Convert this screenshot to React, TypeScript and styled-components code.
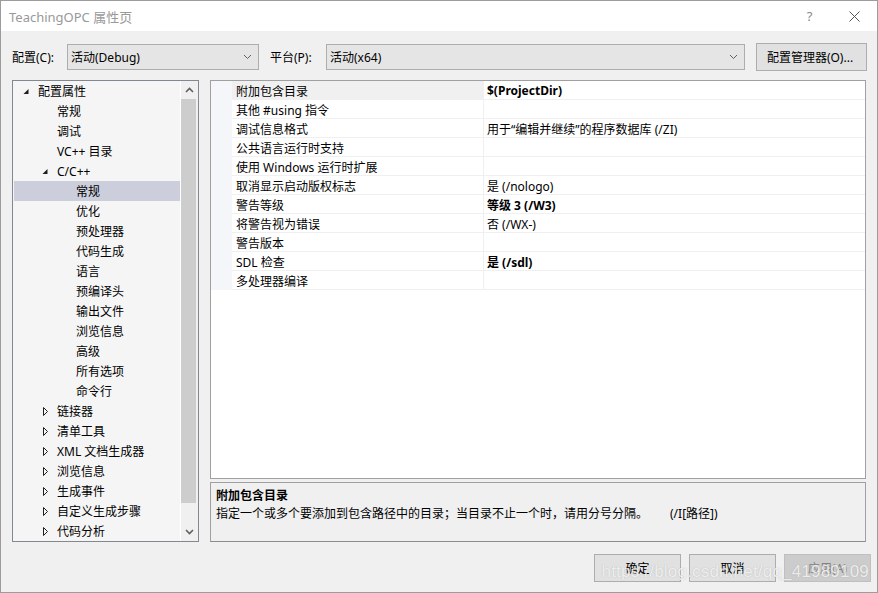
import React from "react";
import styled, { createGlobalStyle } from "styled-components";

const GlobalStyle = createGlobalStyle`
  html, body {
    margin: 0;
    padding: 0;
    background: #f0f0f0;
  }
  * {
    box-sizing: border-box;
  }
`;

const font = `"Segoe UI", "Noto Sans", "Noto Sans CJK SC", sans-serif`;

type TreeItem = {
  label: string;
  level: number;
  arrow?: "open" | "closed";
  selected?: boolean;
};

const treeItems: TreeItem[] = [
  { label: "配置属性", level: 0, arrow: "open" },
  { label: "常规", level: 1 },
  { label: "调试", level: 1 },
  { label: "VC++ 目录", level: 1 },
  { label: "C/C++", level: 1, arrow: "open" },
  { label: "常规", level: 2, selected: true },
  { label: "优化", level: 2 },
  { label: "预处理器", level: 2 },
  { label: "代码生成", level: 2 },
  { label: "语言", level: 2 },
  { label: "预编译头", level: 2 },
  { label: "输出文件", level: 2 },
  { label: "浏览信息", level: 2 },
  { label: "高级", level: 2 },
  { label: "所有选项", level: 2 },
  { label: "命令行", level: 2 },
  { label: "链接器", level: 1, arrow: "closed" },
  { label: "清单工具", level: 1, arrow: "closed" },
  { label: "XML 文档生成器", level: 1, arrow: "closed" },
  { label: "浏览信息", level: 1, arrow: "closed" },
  { label: "生成事件", level: 1, arrow: "closed" },
  { label: "自定义生成步骤", level: 1, arrow: "closed" },
  { label: "代码分析", level: 1, arrow: "closed" },
];

type Prop = { name: string; value?: string; bold?: boolean };

const props: Prop[] = [
  { name: "附加包含目录", value: "$(ProjectDir)", bold: true },
  { name: "其他 #using 指令" },
  { name: "调试信息格式", value: "用于“编辑并继续”的程序数据库 (/ZI)" },
  { name: "公共语言运行时支持" },
  { name: "使用 Windows 运行时扩展" },
  { name: "取消显示启动版权标志", value: "是 (/nologo)" },
  { name: "警告等级", value: "等级 3 (/W3)", bold: true },
  { name: "将警告视为错误", value: "否 (/WX-)" },
  { name: "警告版本" },
  { name: "SDL 检查", value: "是 (/sdl)", bold: true },
  { name: "多处理器编译" },
];

const Window = styled.div`
  position: relative;
  width: 878px;
  height: 593px;
  border: 1px solid #9c9c9c;
  background: #f0f0f0;
  font-family: ${font};
  font-size: 12px;
  color: #000;
  display: flex;
  flex-direction: column;
  overflow: hidden;
`;

const TitleBar = styled.div`
  height: 30px;
  flex: none;
  background: #fff;
  display: flex;
  align-items: center;
  padding: 0 0 0 8px;
`;

const Title = styled.div`
  flex: 1;
  font-size: 13px;
  color: #999;
`;

const TitleButton = styled.div`
  width: 45px;
  height: 30px;
  display: flex;
  align-items: center;
  justify-content: center;
  color: #8a8a8a;
  font-size: 13px;
`;

const Toolbar = styled.div`
  height: 49px;
  flex: none;
  display: flex;
  align-items: flex-start;
  padding: 13px 0 0 11px;
`;

const Label = styled.div<{ $w: number }>`
  width: ${(p) => p.$w}px;
  height: 26px;
  display: flex;
  align-items: center;
  flex: none;
`;

const Combo = styled.div<{ $w: number }>`
  width: ${(p) => p.$w}px;
  height: 26px;
  flex: none;
  border: 1px solid #adadad;
  background: #e5e5e5;
  display: flex;
  align-items: center;
  padding: 0 0 0 3px;
  margin-right: 11px;
`;

const ComboText = styled.span`
  flex: 1;
`;

const ComboArrow = styled.svg`
  width: 20px;
  height: 10px;
  flex: none;
`;

const Button = styled.div<{ $w: number; $disabled?: boolean }>`
  width: ${(p) => p.$w}px;
  height: 28px;
  flex: none;
  border: 1px solid ${(p) => (p.$disabled ? "#bfbfbf" : "#adadad")};
  background: ${(p) => (p.$disabled ? "#cccccc" : "#e1e1e1")};
  color: ${(p) => (p.$disabled ? "#838383" : "#000")};
  display: flex;
  align-items: center;
  justify-content: center;
`;

const ManagerButton = styled(Button)`
  margin-top: -1px;
  padding-right: 3px;
`;

const Main = styled.div`
  height: 462px;
  flex: none;
  display: flex;
  padding: 0 0 0 11px;
  gap: 11px;
`;

const TreePanel = styled.div`
  width: 187px;
  height: 462px;
  border: 1px solid #828790;
  background: #f5f5f5;
  display: flex;
`;

const TreeList = styled.div`
  flex: 1;
  padding-left: 1px;
`;

const TreeRow = styled.div<{ $level: number; $selected?: boolean }>`
  height: 20px;
  display: flex;
  align-items: center;
  padding-left: ${(p) => 5 + p.$level * 19}px;
  background: ${(p) => (p.$selected ? "#cccedb" : "transparent")};
  white-space: nowrap;
`;

const ArrowBox = styled.svg`
  width: 19px;
  height: 20px;
  flex: none;
`;

const ScrollBar = styled.div`
  width: 18px;
  flex: none;
  background: #f0f0f0;
  border-left: 1px solid #fff;
  display: flex;
  flex-direction: column;
`;

const ScrollButton = styled.div`
  height: 18px;
  flex: none;
  display: flex;
  align-items: center;
  justify-content: center;
`;

const ScrollTrack = styled.div`
  flex: 1;
  padding: 0 2px 20px 0;
`;

const Thumb = styled.div`
  height: 404px;
  background: #cdcdcd;
`;

const RightColumn = styled.div`
  width: 656px;
  display: flex;
  flex-direction: column;
  gap: 3px;
`;

const Grid = styled.div`
  height: 399px;
  border: 1px solid #a0a0a0;
  background: #fff;
`;

const GridRow = styled.div`
  height: 19px;
  display: flex;
`;

const Gutter = styled.div`
  width: 21px;
  flex: none;
  background: #f4f6fa;
`;

const NameCell = styled.div<{ $selected?: boolean }>`
  width: 252px;
  flex: none;
  padding: 1px 0 0 4px;
  display: flex;
  align-items: center;
  background: ${(p) => (p.$selected ? "#f0f0f0" : "#fff")};
  border-bottom: 1px solid #f0f0f0;
  border-right: 1px solid #f0f0f0;
  white-space: nowrap;
`;

const ValueCell = styled.div<{ $bold?: boolean }>`
  flex: 1;
  padding: 1px 0 0 3px;
  display: flex;
  align-items: center;
  font-weight: ${(p) => (p.$bold ? 700 : 400)};
  border-bottom: 1px solid #f0f0f0;
  white-space: nowrap;
`;

const Description = styled.div`
  height: 60px;
  border: 1px solid #a0a0a0;
  border-bottom-color: #8c8c8c;
  background: #f0f0f0;
  padding: 3px 5px;
`;

const DescTitle = styled.div`
  font-weight: 700;
  height: 19px;
  line-height: 19px;
`;

const DescText = styled.div`
  height: 19px;
  line-height: 17px;
  white-space: nowrap;
`;

const Switch = styled.span`
  margin-left: 22px;
`;

const Footer = styled.div`
  flex: 1;
  display: flex;
  justify-content: flex-end;
  align-items: flex-start;
  padding: 12px 6px 0 0;
  gap: 8px;
`;

const Watermark = styled.div`
  position: absolute;
  right: 8px;
  bottom: 10px;
  font-family: "Liberation Sans", Arial, sans-serif;
  font-size: 17px;
  color: rgba(255, 255, 255, 0.8);
  text-shadow: 0 0 1px rgba(120, 120, 120, 0.5);
  pointer-events: none;
  letter-spacing: 0.2px;
`;

const Chevron = ({ up }: { up?: boolean }) => (
  <svg width="9" height="6" viewBox="0 0 9 6">
    <path
      d={up ? "M1 5 L4.5 1.5 L8 5" : "M1 1 L4.5 4.5 L8 1"}
      fill="none"
      stroke="#606060"
      strokeWidth="1.6"
    />
  </svg>
);

const TreeArrow = ({ kind }: { kind?: "open" | "closed" }) => (
  <ArrowBox viewBox="0 0 19 20">
    {kind === "open" && <path d="M9.5 8 L9.5 13 L4.5 13 Z" fill="#1e1e1e" />}
    {kind === "closed" && (
      <path d="M5.5 6.5 L9.5 10.5 L5.5 14.5 Z" fill="none" stroke="#1e1e1e" strokeWidth="1" />
    )}
  </ArrowBox>
);

const DropArrow = () => (
  <ComboArrow viewBox="0 0 20 10">
    <path d="M6 3 L9.5 6.5 L13 3" fill="none" stroke="#606060" strokeWidth="1" />
  </ComboArrow>
);

const App = () => {
  return (
    <>
      <GlobalStyle />
      <Window>
        <TitleBar>
          <Title>TeachingOPC 属性页</Title>
          <TitleButton>?</TitleButton>
          <TitleButton>
            <svg width="11" height="11" viewBox="0 0 11 11">
              <path d="M0.5 0.5 L10.5 10.5 M10.5 0.5 L0.5 10.5" stroke="#555" strokeWidth="1" />
            </svg>
          </TitleButton>
        </TitleBar>
        <Toolbar>
          <Label $w={55}>配置(C):</Label>
          <Combo $w={192}>
            <ComboText>活动(Debug)</ComboText>
            <DropArrow />
          </Combo>
          <Label $w={56}>平台(P):</Label>
          <Combo $w={419}>
            <ComboText>活动(x64)</ComboText>
            <DropArrow />
          </Combo>
          <ManagerButton $w={111}>配置管理器(O)...</ManagerButton>
        </Toolbar>
        <Main>
          <TreePanel>
            <TreeList>
              {treeItems.map((item, i) => (
                <TreeRow key={i} $level={item.level} $selected={item.selected}>
                  <TreeArrow kind={item.arrow} />
                  {item.label}
                </TreeRow>
              ))}
            </TreeList>
            <ScrollBar>
              <ScrollButton>
                <Chevron up />
              </ScrollButton>
              <ScrollTrack>
                <Thumb />
              </ScrollTrack>
              <ScrollButton>
                <Chevron />
              </ScrollButton>
            </ScrollBar>
          </TreePanel>
          <RightColumn>
            <Grid>
              {props.map((p, i) => (
                <GridRow key={i}>
                  <Gutter />
                  <NameCell $selected={i === 0}>{p.name}</NameCell>
                  <ValueCell $bold={p.bold}>{p.value}</ValueCell>
                </GridRow>
              ))}
            </Grid>
            <Description>
              <DescTitle>附加包含目录</DescTitle>
              <DescText>
                指定一个或多个要添加到包含路径中的目录；当目录不止一个时，请用分号分隔。
                <Switch>(/I[路径])</Switch>
              </DescText>
            </Description>
          </RightColumn>
        </Main>
        <Footer>
          <Button $w={87}>确定</Button>
          <Button $w={87}>取消</Button>
          <Button $w={87} $disabled>
            应用(A)
          </Button>
        </Footer>
        <Watermark>https://blog.csdn.net/qq_41989109</Watermark>
      </Window>
    </>
  );
};

export default App;
